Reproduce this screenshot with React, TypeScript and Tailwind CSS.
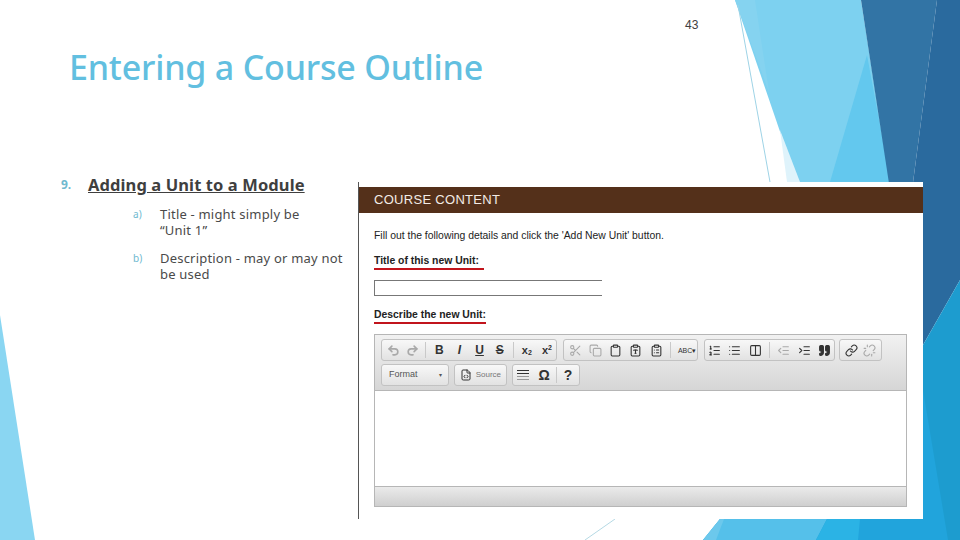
import { Clipboard, ClipboardList, ClipboardType, Columns2, Copy, FileCode, IndentDecrease, IndentIncrease, Link, List, ListOrdered, Quote, Redo2, Scissors, Undo2, Unlink } from "lucide-react";
import type { ReactNode } from "react";

function Backdrop() {
  return (
    <svg className="absolute inset-0" width="960" height="540" viewBox="0 0 960 540">
      <polygon points="735,0 861,0 900,250 800,190" fill="#7dd1f0" />
      <polygon points="735,0 755,0 769,92" fill="#85d3f0" />
      <polygon points="780,130 800,182 787,182" fill="#dff3fb" />
      <polygon points="830,182 867,55 892,190" fill="#63c8ee" />
      <polygon points="861,0 937,0 912,190 890,190" fill="#3274a5" />
      <polygon points="937,0 960,0 960,280 923,345 900,300 912,190" fill="#2a6a9e" />
      <polygon points="923,345 960,280 960,540 923,540" fill="#1d9ccf" />
      <polygon points="923,390 948,540 923,540" fill="#21a4dc" />
      <polygon points="703,540 720,519 923,519 923,540" fill="#21a4dc" />
      <polygon points="703,540 720,519 827,519 816,540" fill="#55c0ea" />
      <polygon points="703,540 720,519 724,519 716,540" fill="#6cc8ec" />
      <polygon points="827,519 860,519 858,540 816,540" fill="#2bb3e5" />
      <polygon points="0,315 35,540 0,540" fill="#8ad6f2" />
      <line x1="738" y1="5" x2="770" y2="182" stroke="#9ed3e6" strokeWidth="1" />
      <line x1="585" y1="540" x2="615" y2="519" stroke="#b5d9e4" strokeWidth="1" />
    </svg>
  );
}

function Group({ className, children }: { className: string; children: ReactNode }) {
  return (
    <div className={`flex h-[22px] items-center rounded-[3px] border border-[#c2c2c2] bg-gradient-to-b from-[#f8f8f8] to-[#e2e2e2] ${className}`}>
      {children}
    </div>
  );
}

function Sep() {
  return <div className="h-[16px] w-px bg-[#c9c9c9]" />;
}

function Glyph({ className, children }: { className: string; children: ReactNode }) {
  return <span className={`block w-[14px] text-center font-['Liberation_Sans',sans-serif] leading-none text-[#333333] ${className}`}>{children}</span>;
}

function Toolbar() {
  const dim = "h-[13px] w-[13px] text-[#a9a9a9]";
  const dark = "h-[13px] w-[13px] text-[#333333]";
  return (
    <div className="h-[56px] border-b border-[#b6b6b6] bg-gradient-to-b from-[#f1f1f1] to-[#d6d6d6] px-[6px] pt-[4px]">
      <div className="flex gap-[5px]">
        <Group className="w-[176px] justify-between pl-[5px] pr-[2px]">
          <Undo2 className={dim} strokeWidth={3} />
          <Redo2 className={dim} strokeWidth={3} />
          <Sep />
          <Glyph className="text-[12px] font-bold">B</Glyph>
          <Glyph className="text-[12px] font-bold italic">I</Glyph>
          <Glyph className="text-[12px] font-bold underline">U</Glyph>
          <Glyph className="text-[12px] font-bold line-through">S</Glyph>
          <Sep />
          <Glyph className="text-[11px] font-bold">x<sub className="text-[7px]">2</sub></Glyph>
          <Glyph className="text-[11px] font-bold">x<sup className="text-[7px]">2</sup></Glyph>
        </Group>
        <Group className="ml-[1px] w-[135px] justify-between pl-[5px] pr-[5px]">
          <Scissors className={dim} />
          <Copy className={dim} />
          <Clipboard className={dark} />
          <ClipboardType className={dark} />
          <ClipboardList className={dark} />
          <Sep />
          <Glyph className="text-[7px]">ABC▾</Glyph>
        </Group>
        <Group className="ml-[1px] w-[131px] justify-between px-[3px]">
          <ListOrdered className={dark} />
          <List className={dark} />
          <Columns2 className={dark} />
          <Sep />
          <IndentDecrease className={dim} />
          <IndentIncrease className={dark} />
          <Quote className={dark} fill="#333333" />
        </Group>
        <Group className="ml-[-1px] w-[43px] justify-between px-[5px]">
          <Link className={dark} />
          <Unlink className={dim} />
        </Group>
      </div>
      <div className="mt-[3px] flex gap-[5px]">
        <Group className="w-[68px] justify-between pl-[7px] pr-[6px]">
          <span className="font-['Liberation_Sans',sans-serif] text-[9px] text-[#555555]">Format</span>
          <span className="text-[6px] text-[#555555]">▾</span>
        </Group>
        <Group className="w-[53px] justify-between px-[5px]">
          <FileCode className="h-[12px] w-[12px] text-[#333333]" />
          <span className="font-['Liberation_Sans',sans-serif] text-[8px] text-[#777777]">Source</span>
        </Group>
        <Group className="w-[68px] pl-[3px]">
          <span className="ml-[1px] flex w-[12px] flex-col gap-[2px]">
            <span className="h-px bg-[#333333]" />
            <span className="h-px bg-[#333333]" />
            <span className="h-px bg-[#999999]" />
            <span className="h-px bg-[#999999]" />
          </span>
          <Glyph className="ml-[8px] text-[14px] font-bold">Ω</Glyph>
          <span className="ml-[5px]"><Sep /></span>
          <Glyph className="ml-[4px] text-[14px] font-bold">?</Glyph>
        </Group>
      </div>
    </div>
  );
}

function CourseContent() {
  return (
    <div className="h-[337px] w-[565px] border-l border-[#555555] bg-white pt-[5px] font-['Liberation_Sans',sans-serif]">
      <div className="flex h-[26px] items-center bg-[#54301a] pl-[15px] text-[13px] tracking-[0.3px] text-[#f3ece6]">COURSE CONTENT</div>
      <div className="px-[15px]">
        <p className="mt-[16px] text-[10.4px] leading-[13px] text-[#222222]">Fill out the following details and click the 'Add New Unit' button.</p>
        <p className="mt-[13px] w-[110px] border-b-2 border-[#c1141c] pb-[1px] text-[10.4px] font-bold leading-[12px] text-[#222222]">Title of this new Unit:</p>
        <div className="mt-[10px] h-[16px] w-[228px] border-y border-l border-[#777777]" />
        <p className="mt-[13px] w-[112px] border-b-2 border-[#c1141c] pb-[1px] text-[10.4px] font-bold leading-[12px] text-[#222222]">Describe the new Unit:</p>
        <div className="mt-[10px] h-[173px] w-[533px] border border-[#b6b6b6]">
          <Toolbar />
          <div className="h-[95px] bg-white" />
          <div className="h-[20px] border-t border-[#b6b6b6] bg-gradient-to-b from-[#ebebeb] to-[#cfcfcf]" />
        </div>
      </div>
    </div>
  );
}

export default function App() {
  return (
    <div className="relative h-[540px] w-[960px] overflow-hidden bg-white font-['Noto_Sans',sans-serif]">
      <Backdrop />
      <div className="relative flex h-full pt-[17px]">
        <div className="w-[358px] shrink-0">
          <h1 className="ml-[69px] mt-[30px] whitespace-nowrap text-[34px] font-medium leading-[40px] tracking-[-0.2px] text-[#62bfe0]">Entering a Course Outline</h1>
          <div className="ml-[61px] mt-[86px] flex">
            <span className="w-[27px] text-[12px] font-bold leading-[24px] text-[#6fb9cf]">9.</span>
            <span className="whitespace-nowrap text-[16.5px] font-bold leading-[24px] tracking-[0.1px] text-[#3f3f3f] underline">Adding a Unit to a Module</span>
          </div>
          <ol className="ml-[133px] mt-[9px] flex flex-col gap-[12px] text-[13px] leading-[16px] tracking-[0.2px] text-[#4a4a4a]">
            <li className="flex">
              <span className="w-[27px] flex-none text-[10px] text-[#6fb9cf]">a)</span>
              <span className="whitespace-nowrap">Title - might simply be<br />“Unit 1”</span>
            </li>
            <li className="flex">
              <span className="w-[27px] flex-none text-[10px] text-[#6fb9cf]">b)</span>
              <span className="whitespace-nowrap">Description - may or may not<br />be used</span>
            </li>
          </ol>
        </div>
        <div className="flex flex-col">
          <div className="ml-[327px] mt-[1px] text-[12px] leading-[14px] text-[#404040] font-['Liberation_Sans',sans-serif]">43</div>
          <div className="mt-[150px]">
            <CourseContent />
          </div>
        </div>
      </div>
    </div>
  );
}
